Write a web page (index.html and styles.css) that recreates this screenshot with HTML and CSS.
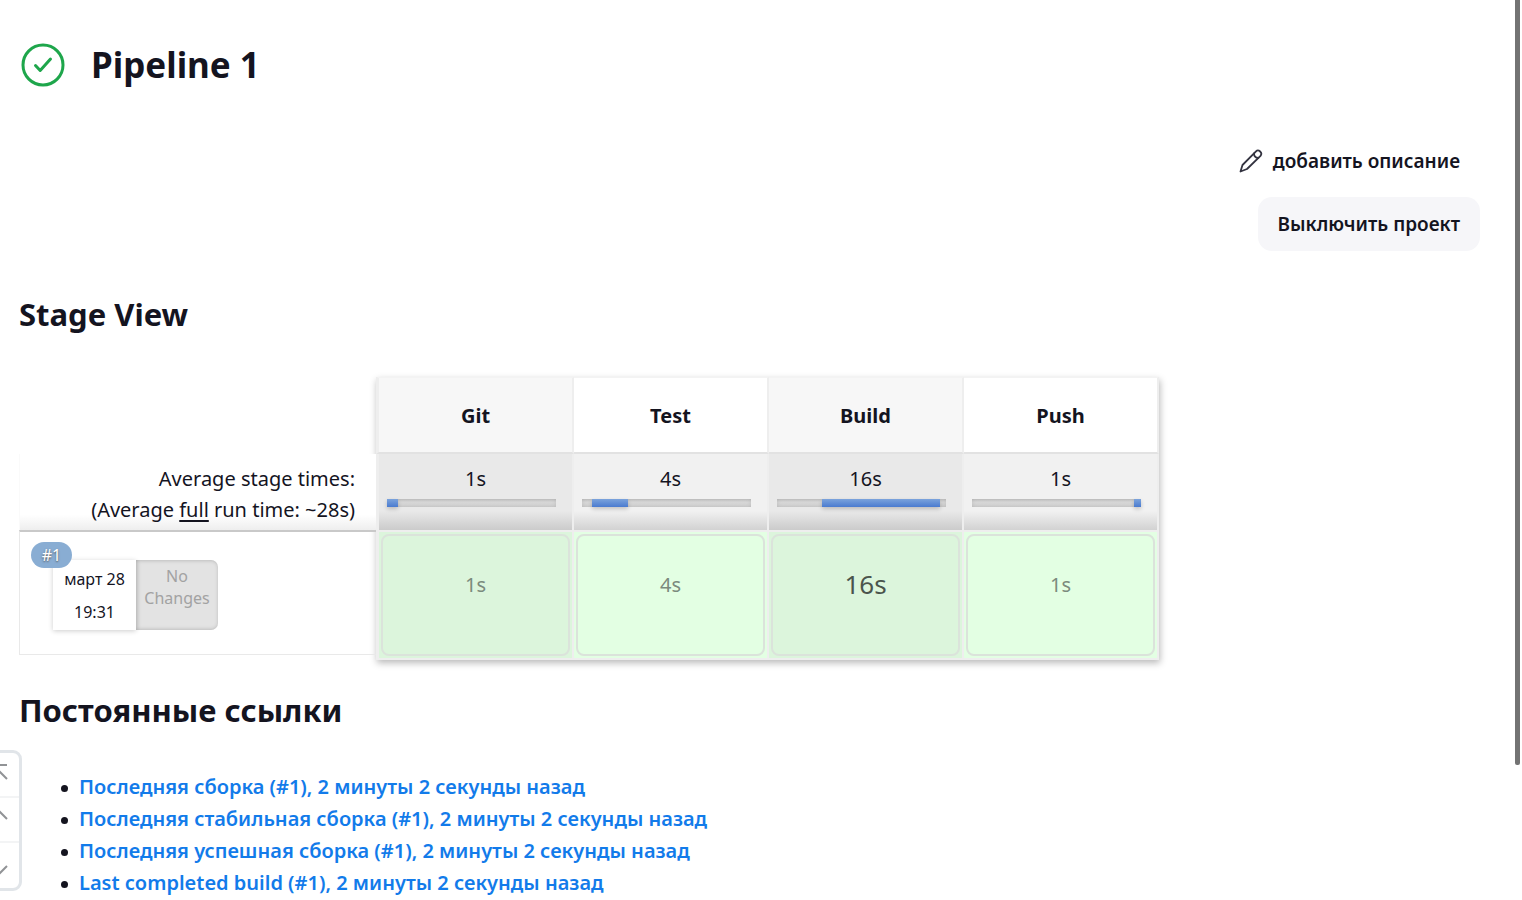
FILE: index.html
```html
<!DOCTYPE html>
<html lang="ru">
<head>
<meta charset="utf-8">
<meta name="viewport" content="width=device-width, initial-scale=1">
<title>Pipeline 1</title>
<link rel="stylesheet" href="styles.css">
</head>
<body>
<main class="page">
  <header class="job-header">
    <svg class="status-icon" viewBox="0 0 44 44" fill="none" stroke="#1ea64b" stroke-linecap="round" stroke-linejoin="round" role="img" aria-label="Success">
      <circle cx="22" cy="22" r="20" stroke-width="3"/>
      <path d="M14.500 22.500l4.700 5L29.500 16" stroke-width="3"/>
    </svg>
    <h1 class="job-title">Pipeline 1</h1>
  </header>

  <div class="job-actions">
    <a class="edit-link" href="#description">
      <svg class="pencil" viewBox="0 0 24 24" fill="none" stroke="#333340" stroke-width="1.800" stroke-linecap="round" stroke-linejoin="round" aria-hidden="true">
        <path d="M1.500 22.500l2-6.500L17 2.300c2.500-2.500 7 1.500 4.500 4.500L8 20z"/>
        <path d="M15 4.500c0 2.500 1.500 4.300 4.300 4.500"/>
      </svg>
      добавить описание
    </a>
    <button class="disable-button" type="button">Выключить проект</button>
  </div>

  <section>
    <h2 class="section-title">Stage View</h2>
    <div class="stage-view">
      <table class="stage-table">
        <colgroup><col class="col-run"><col class="col-first"><col class="col-stage"><col class="col-stage"><col class="col-stage"></colgroup>
        <thead>
          <tr class="names">
            <td></td>
            <th class="stage odd first" scope="col">Git</th>
            <th class="stage" scope="col">Test</th>
            <th class="stage odd" scope="col">Build</th>
            <th class="stage" scope="col">Push</th>
          </tr>
        </thead>
        <tbody>
          <tr class="averages">
            <th class="average-label" scope="row">Average stage times:<br>(Average <u>full</u> run time: ~28s)</th>
            <td class="stage odd first">1s<div class="bar"><div class="bar-fill" style="margin-left:0%;width:6.5%"></div></div></td>
            <td class="stage">4s<div class="bar"><div class="bar-fill" style="margin-left:6%;width:21%"></div></div></td>
            <td class="stage odd">16s<div class="bar"><div class="bar-fill" style="margin-left:26.5%;width:70%"></div></div></td>
            <td class="stage">1s<div class="bar"><div class="bar-fill" style="margin-left:96%;width:4%"></div></div></td>
          </tr>
          <tr class="run">
            <th class="run-cell" scope="row">
              <div class="run-info">
                <span class="badge">#1</span>
                <div class="run-date"><span>март 28</span><span>19:31</span></div>
                <div class="run-changes">No<br>Changes</div>
              </div>
            </th>
            <td class="stage odd first"><div class="result">1s</div></td>
            <td class="stage"><div class="result">4s</div></td>
            <td class="stage odd"><div class="result longest">16s</div></td>
            <td class="stage"><div class="result">1s</div></td>
          </tr>
        </tbody>
      </table>
    </div>
  </section>

  <section>
    <h2 class="section-title">Постоянные ссылки</h2>
    <ul class="permalinks">
      <li><a href="#last">Последняя сборка (#1), 2 минуты 2 секунды назад</a></li>
      <li><a href="#stable">Последняя стабильная сборка (#1), 2 минуты 2 секунды назад</a></li>
      <li><a href="#successful">Последняя успешная сборка (#1), 2 минуты 2 секунды назад</a></li>
      <li><a href="#completed">Last completed build (#1), 2 минуты 2 секунды назад</a></li>
    </ul>
  </section>
</main>

<nav class="jump-panel" aria-label="Прокрутка">
  <button type="button" aria-label="В начало"><svg viewBox="0 0 24 24"><path d="M3 2h18M3 16l9-9 9 9"/></svg></button>
  <button type="button" aria-label="Вверх"><svg viewBox="0 0 24 24"><path d="M3 11l9-9 9 9"/></svg></button>
  <button type="button" aria-label="Вниз"><svg viewBox="0 0 24 24"><path d="M3 12l9 9 9-9"/></svg></button>
</nav>
<div class="scroll-thumb"></div>
</body>
</html>
```
FILE: styles.css
```css
* { box-sizing: border-box; }

body {
  margin: 0;
  min-height: 100vh;
  position: relative;
  overflow: hidden;
  background: #fff;
  color: #14141f;
  font: 400 20px/31px "Noto Sans", "Open Sans", sans-serif;
}

.page { padding: 40px 42px 0 19px; }

.job-header { display: flex; align-items: center; gap: 26px; height: 50px; padding-left: 2px; }
.status-icon { width: 44px; height: 44px; flex: none; }
.job-title { margin: 0; font-size: 35px; line-height: 50px; font-weight: 700; }

.job-actions {
  display: flex;
  flex-direction: column;
  align-items: flex-end;
  gap: 9px;
  margin-top: 44px;
  font-size: 19px;
  font-weight: 600;
}
.edit-link {
  display: flex;
  align-items: center;
  gap: 10px;
  height: 54px;
  padding: 0 20px;
  color: #14141f;
  text-decoration: none;
}
.pencil { width: 24px; height: 24px; }
.disable-button {
  height: 54px;
  padding: 0 20px;
  border: 0;
  border-radius: 14px;
  background: #f6f6f9;
  color: #14141f;
  font: inherit;
}

.section-title { margin: 40px 0; font-size: 31px; line-height: 46px; font-weight: 700; }

.stage-view { position: relative; width: 1140px; }
.stage-view::before {
  content: "";
  position: absolute;
  inset: 0 0 0 357px;
  box-shadow: 1px 3px 7px rgba(0, 0, 0, 0.28);
}
.stage-table {
  position: relative;
  width: 100%;
  table-layout: fixed;
  border-collapse: separate;
  border-spacing: 0;
}
.stage-table th, .stage-table td { padding: 0; }
.col-run { width: 357px; }
.col-first { width: 198px; }
.col-stage { width: 195px; }

.stage { background: #fff; border-right: 2px solid #eee; text-align: center; }
.stage.odd { background: #f7f7f7; }
.stage.first { border-left: 3px solid #eee; }

.names { height: 77px; }
.names .stage { border-top: 1px solid #f3f3f3; border-bottom: 2px solid #e2e2e2; font-size: 20px; font-weight: 700; }

.averages { height: 76px; }
.averages .stage {
  padding: 9px 16px 0 8px;
  vertical-align: top;
  background: linear-gradient(#f1f1f1 75%, #d2d2d2);
}
.averages .stage.odd { background: linear-gradient(#e9e9e9 75%, #cbcbcb); }
.averages .stage { text-indent: 8px; }
.averages .average-label {
  padding: 9px 21px 0 0;
  vertical-align: top;
  text-align: right;
  font-weight: 400;
  border-left: 1px solid #fafafa;
  background: linear-gradient(#fff 80%, #eee);
}
.average-label u { text-underline-offset: 3px; }

.bar {
  height: 8px;
  margin-top: 5px;
  background: linear-gradient(#c6c6c6, #d8d8d8 40%, #d2d2d2);
  box-shadow: inset 0 0 4px rgba(0, 0, 0, 0.12);
}
.bar-fill { height: 8px; background: linear-gradient(#7ba3dc, #4a7bd0); box-shadow: 0 2px 4px rgba(0, 0, 0, 0.2); }

.run { height: 130px; }
.run .stage {
  height: 130px;
  padding: 2px;
  vertical-align: top;
  border-top: 2px solid #eee;
  border-bottom: 2px solid #eee;
  background: #e3ffe3;
}
.run .stage.odd { background: #dcf5dc; }
.result {
  height: 122px;
  padding-top: 33px;
  border: 2px solid #dbe3db;
  border-radius: 8px;
  color: #7b8a7d;
}
.result.longest { color: #4a544c; font-size: 26px; }
.run-cell { vertical-align: top; text-align: left; font-weight: 400; }
.run-info {
  position: relative;
  display: flex;
  height: 125px;
  padding: 28px 0 24px 33px;
  border: 1px solid #e9e9e9;
  border-top: 2px solid #c9c9c9;
  border-right: 0;
}
.badge {
  position: absolute;
  left: 11px;
  top: 10px;
  width: 41px;
  height: 26px;
  border-radius: 13px;
  background: #89add3;
  color: #fff;
  font-size: 16px;
  line-height: 26px;
  text-align: center;
  text-shadow: 0 1px 2px #555;
}
.run-date {
  display: flex;
  flex-direction: column;
  width: 83px;
  padding-top: 3px;
  font-size: 16px;
  line-height: 33px;
  text-align: center;
  box-shadow: 0 1px 5px rgba(0, 0, 0, 0.2);
}
.run-changes {
  width: 82px;
  padding-top: 5px;
  border-radius: 0 7px 7px 0;
  background: #e3e3e3;
  box-shadow: inset 1px 0 4px rgba(0, 0, 0, 0.25);
  color: #a2a2a2;
  font-size: 16px;
  line-height: 22px;
  text-align: center;
}

section + section .section-title { margin: 27px 0 38px; }

.permalinks { margin: 0; padding: 0 0 0 60px; font-weight: 600; line-height: 32px; list-style: none; }
.permalinks li::before {
  content: "";
  float: left;
  width: 7px;
  height: 7px;
  margin: 14px 0 0 -18px;
  border-radius: 50%;
  background: #14141f;
}
.permalinks a { color: #127bea; text-decoration: none; }

.jump-panel {
  position: absolute;
  left: -26px;
  top: 750px;
  width: 48px;
  border: 3px solid #e1e5e9;
  border-radius: 9px;
  background: #fff;
}
.jump-panel button {
  display: block;
  width: 100%;
  height: 45px;
  padding: 0;
  border: 0;
  background: none;
}
.jump-panel button:first-child { height: 43px; }
.jump-panel button:last-child { height: 47px; }
.jump-panel button + button { border-top: 2px solid #f3f4f5; }
.jump-panel svg { display: block; width: 24px; height: 24px; margin: 0 auto; fill: none; stroke: #919396; stroke-width: 2; }

.scroll-thumb {
  position: absolute;
  top: 0;
  right: 2px;
  width: 5px;
  height: 85vh;
  border-radius: 0 0 2px 2px;
  background: #737373;
}
```
